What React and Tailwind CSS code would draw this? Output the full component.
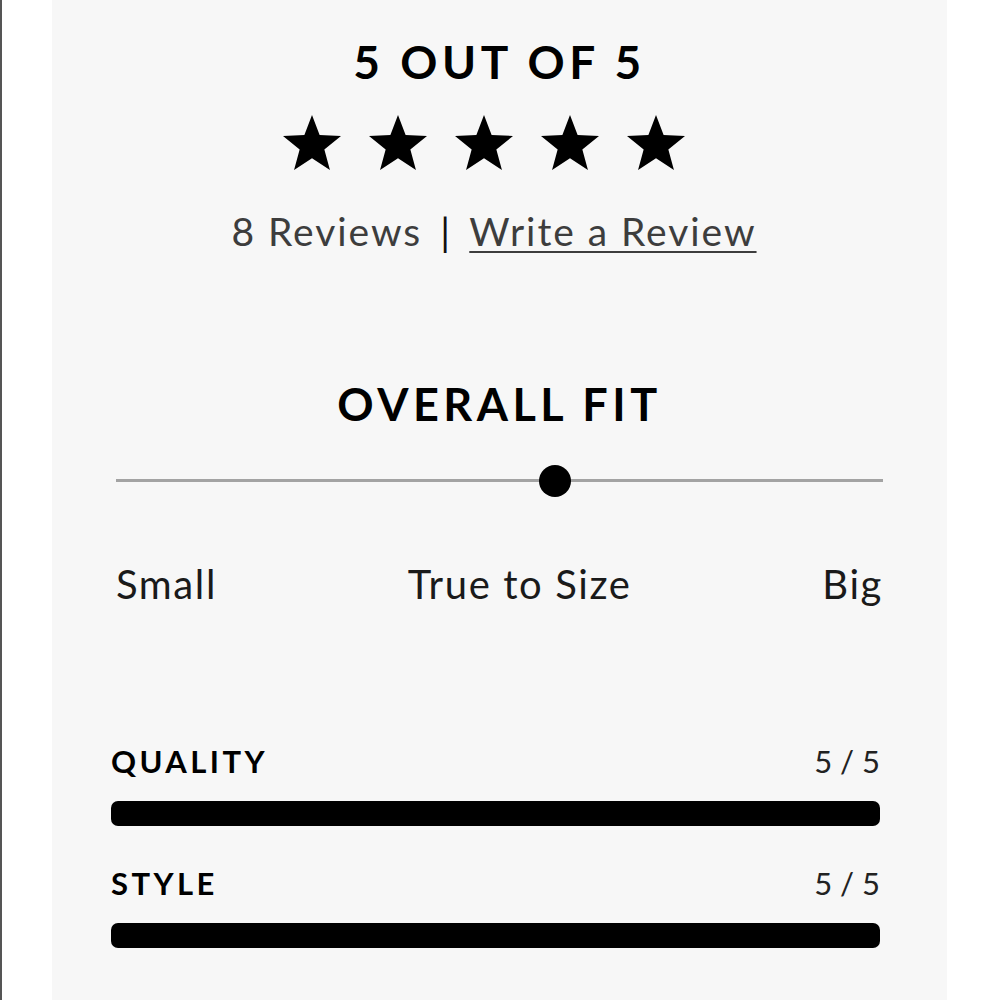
import React from 'react';

const font = { fontFamily: 'Lato, "Open Sans", sans-serif' };

const Star = () => (
  <svg width="58" height="55" viewBox="-0.951 -1 1.902 1.809" preserveAspectRatio="none" className="block">
    <polygon
      points="0,-1 0.25,-0.345 0.951,-0.309 0.405,0.132 0.588,0.809 0,0.425 -0.588,0.809 -0.405,0.132 -0.951,-0.309 -0.25,-0.345"
      fill="#000"
    />
  </svg>
);

const ScoreBar = ({ label, score }) => (
  <div>
    <div className="flex items-start justify-between">
      <span className="text-[31px] font-bold tracking-[0.11em] leading-none text-black">{label}</span>
      <span className="text-[31px] leading-none text-[#222]">{score}</span>
    </div>
    <div className="mt-[24px] h-[25px] rounded-[7px] bg-black" />
  </div>
);

export default function App() {
  return (
    <div className="flex h-[1000px] w-[1000px] bg-white" style={font}>
      <div className="w-[2px] bg-[#555]" />
      <div className="ml-[50px] w-[895px] bg-[#f7f7f7]">
        {/* rating summary */}
        <div className="flex flex-col items-center pt-[39px]">
          <h2 className="text-[46px] font-bold leading-none tracking-[0.1em] text-black">5 OUT OF 5</h2>
          <div className="mr-[32px] mt-[30px] flex gap-[28px]">
            <Star />
            <Star />
            <Star />
            <Star />
            <Star />
          </div>
          <p className="mr-[11px] mt-[42px] text-[39px] leading-none tracking-[0.05em] text-[#3d3d3d]">
            8 Reviews <span className="mx-[6px] text-[#111]">|</span>{' '}
            <a href="#" className="underline decoration-2 underline-offset-[5px]">Write a Review</a>
          </p>
        </div>

        {/* fit slider */}
        <div className="mt-[131px] flex flex-col items-center">
          <h3 className="text-[45px] font-bold leading-none tracking-[0.1em] text-black">OVERALL FIT</h3>
        </div>
        <div className="mx-[64px] mt-[52px]">
          <div className="relative h-[3px] bg-[#a3a3a3]">
            <div className="absolute left-[57.3%] top-1/2 h-[32px] w-[32px] -translate-x-1/2 -translate-y-1/2 rounded-full bg-black" />
          </div>
          <div className="mt-[82px] flex justify-between text-[40px] leading-none tracking-[0.04em] text-[#1a1a1a]">
            <span>Small</span>
            <span>True to Size</span>
            <span>Big</span>
          </div>
        </div>

        {/* score bars */}
        <div className="ml-[59px] mr-[67px] mt-[142px] flex flex-col gap-[42px]">
          <ScoreBar label="QUALITY" score="5 / 5" />
          <ScoreBar label="STYLE" score="5 / 5" />
        </div>
      </div>
    </div>
  );
}
